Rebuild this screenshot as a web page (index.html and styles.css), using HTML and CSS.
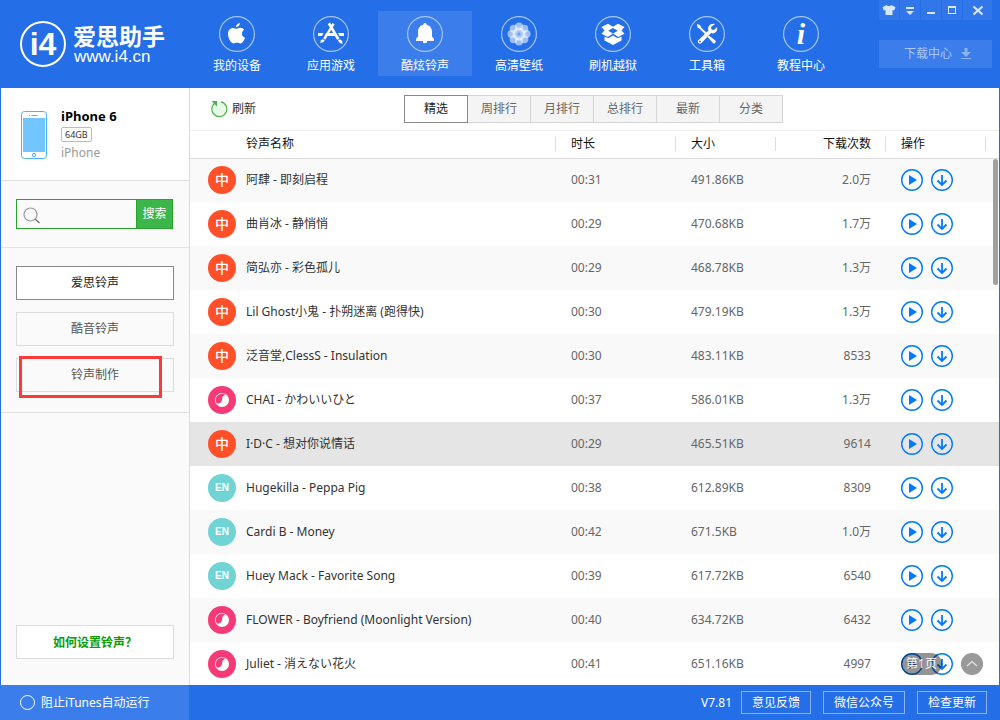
FILE: index.html
```html
<!DOCTYPE html>
<html lang="zh-CN">
<head>
<meta charset="utf-8">
<meta name="viewport" content="width=device-width, initial-scale=1">
<title>爱思助手</title>
<link rel="stylesheet" href="styles.css">
</head>
<body>
<svg class="sprite" aria-hidden="true">
  <symbol id="play" viewBox="0 0 22 22"><circle cx="11" cy="11" r="10.3" fill="none" stroke="currentColor" stroke-width="1.4"/><path d="M8 6l8 5-8 5z" fill="currentColor"/></symbol>
  <symbol id="down" viewBox="0 0 22 22"><circle cx="11" cy="11" r="10.3" fill="none" stroke="currentColor" stroke-width="1.4"/><path d="M11 6v10M6.500 11.500L11 16l4.500-4.500" fill="none" stroke="currentColor" stroke-width="1.8"/></symbol>
  <symbol id="swirl" viewBox="0 0 28 28"><circle cx="14" cy="14" r="7" fill="#fff"/><path d="M9 17.600A6.200 6.200 0 0 1 17.800 9C15 9 14.300 11 14.200 13c-.2 3.200-2.400 4.900-5.200 4.600z" fill="#f63a78"/></symbol>
</svg>
<div class="app">
  <header class="topbar">
    <a class="brand" href="#">
      <span class="brand-mark">i4</span>
      <span class="brand-text"><strong>爱思助手</strong><span>www.i4.cn</span></span>
    </a>
    <nav class="mainnav">
      <a href="#"><svg viewBox="0 0 36 36"><circle class="ring" cx="18" cy="18" r="17.400"/><path d="M20.800 7c.2 2.300-1.800 4.200-3.800 4.200C16.800 9.200 18.700 7.200 20.800 7zM17.700 12.700c.9 0 2-.9 3.800-.9 1.600 0 2.900.8 3.700 2-3.400 2-2.800 6.700.8 8-.8 2.300-2.500 5.600-4.500 5.600-1.300 0-1.900-.7-3.500-.7s-2.200.7-3.500.7c-2.600 0-5.500-5.200-5.500-9.300 0-4 2.400-6.200 5-6.200 1.500 0 2.800.8 3.700.8z"/></svg>我的设备</a>
      <a href="#"><svg viewBox="0 0 36 36"><circle class="ring" cx="18" cy="18" r="17.400"/><path d="M5 17h5.500l-1.500 3H5zM13 17h8l1.500 3H11.500zM25 17h6v3h-4.500z"/><path d="M17 6.500l9.500 16-2.300 1.400-9.500-16zM24.800 24.600l2.200-1.300 2.200 1.800.3 2.900-2.600-1zM19.500 7l2.100 1.200-2 3.400-2-1.300zM16.800 11.500l2 1.200-6.500 11-2.100-1.200zM9.700 23.200l2.100 1.200-1.400 1.600-3 1.200.4-3z"/></svg>应用游戏</a>
      <a href="#" class="active" aria-current="page"><svg viewBox="0 0 36 36"><circle class="ring" cx="18" cy="18" r="17.400"/><path d="M18 7c-1 0-1.600.7-1.600 1.800C13 9.500 11 12.200 11 16v4.500c0 .8-2 1.400-2 2.500v2h7v1.300c0 .5.800.9 2 .9s2-.4 2-.9V25h7v-2c0-1.100-2-1.700-2-2.500V16c0-3.800-2-6.500-5.400-7.200C19.600 7.700 19 7 18 7z"/></svg>酷炫铃声</a>
      <a href="#"><svg viewBox="0 0 36 36"><circle class="ring" cx="18" cy="18" r="17.400"/><g fill-opacity=".55"><circle cx="18" cy="10.500" r="4"/><circle cx="23.300" cy="12.700" r="4"/><circle cx="25.500" cy="18" r="4"/><circle cx="23.300" cy="23.300" r="4"/><circle cx="18" cy="25.500" r="4"/><circle cx="12.700" cy="23.300" r="4"/><circle cx="10.500" cy="18" r="4"/><circle cx="12.700" cy="12.700" r="4"/></g><circle cx="18" cy="18" r="6.500" fill-opacity=".6"/><circle cx="18" cy="18" r="1.500" fill="#6d9ff0"/></svg>高清壁纸</a>
      <a href="#"><svg viewBox="0 0 36 36"><circle class="ring" cx="18" cy="18" r="17.400"/><path d="M13 7.800l5 3 5-3 6.500 3.200-3 3.500 3 3.300-6.300 3.200-5.200-3.500-5.200 3.500-6.300-3.200 3-3.300-3-3.500zM18 12l-4.800 2.800L18 17.500l4.800-2.700z" fill-rule="evenodd"/><path d="M9.500 20.500l3.800 1.800L18 19.500l4.700 2.800 3.800-1.800v4L18 29l-8.500-4.500z"/></svg>刷机越狱</a>
      <a href="#"><svg viewBox="0 0 36 36"><circle class="ring" cx="18" cy="18" r="17.400"/><path d="M8 8l3 1 1.500 3L18 17l-1.500 1.500L11 13l-2.500-1.500zM20 19.500l6.500 5.300c1 1-1 3.500-2.300 2.500L18.500 21z"/><path d="M26 8c-5-1-8 3-6.500 6.500l-10 9.500c-2 2 1 5 3 3l9.500-10c3.500 1.500 7-1.500 6-6l-3 3-2.500-.5-.5-2.500z"/><circle cx="11" cy="25.500" r=".9" fill="#246ee8"/></svg>工具箱</a>
      <a href="#"><svg viewBox="0 0 36 36"><circle class="ring" cx="18" cy="18" r="17.400"/><text class="info-i" x="18" y="28" text-anchor="middle">i</text></svg>教程中心</a>
    </nav>
    <div class="tools">
      <div class="winbtns">
        <button aria-label="换肤"><svg viewBox="0 0 20 20"><path d="M7.500 5c1 1.300 4 1.300 5 0l4 2.200-1.300 3.300-1.700-.6V15h-7V9.900l-1.700.6L3.500 7.200z"/></svg></button>
        <button aria-label="菜单"><svg viewBox="0 0 20 20"><path d="M6 7h8v2H6zM6 11h8l-4 4z"/></svg></button>
        <button aria-label="最小化"><svg viewBox="0 0 20 20"><path d="M6 12h8v2H6z"/></svg></button>
        <button aria-label="最大化"><svg viewBox="0 0 20 20"><path fill-rule="evenodd" d="M6 6h8v8H6zM7 8v5h6V8z"/></svg></button>
        <button class="close" aria-label="关闭"><svg viewBox="0 0 20 20"><path d="M5.500 6.500l9 8M14.500 6.500l-9 8" stroke="#d9e6fc" stroke-width="2.200"/></svg></button>
      </div>
      <button class="dlcenter">下载中心<svg viewBox="0 0 10 12"><path d="M3.500 0h3v4H10L5 9 0 4h3.500zM0 10h10v1H0z"/></svg></button>
    </div>
  </header>

  <div class="body">
    <aside class="sidebar">
      <section class="device">
        <svg class="phone" viewBox="0 0 26 48"><rect x=".5" y=".5" width="25" height="47" rx="3" fill="#fff" stroke="#4db0ff"/><path fill="#72c5ff" d="M2 7h22v34H2z"/><path d="M10.500 4.500h6M8 4.500h1" stroke="#4db0ff"/><circle cx="13" cy="44" r="1.700" fill="none" stroke="#4db0ff"/></svg>
        <div class="device-info">
          <strong>iPhone 6</strong>
          <span class="capacity">64GB</span>
          <span class="model">iPhone</span>
        </div>
      </section>
      <form class="search">
        <label for="q" aria-label="搜索铃声"><svg viewBox="0 0 18 18"><circle cx="7.500" cy="7.500" r="6.500" fill="none" stroke="#999" stroke-width="1.200"/><path d="M12 12l4.500 4" stroke="#777" stroke-width="1.500"/></svg></label>
        <input id="q" type="text">
        <button type="button">搜索</button>
      </form>
      <nav class="sources">
        <button class="active">爱思铃声</button>
        <button>酷音铃声</button>
        <div class="marked"><button>铃声制作</button><span class="marker"></span></div>
      </nav>
      <button class="help">如何设置铃声<span class="qmark">？</span></button>
    </aside>

    <main class="content">
      <div class="toolbar">
        <button class="refresh"><svg viewBox="0 0 18 18"><path d="M11 1.800A7.500 7.500 0 1 1 5 3" fill="#e6fae6" stroke="#4cb050" stroke-width="1.200"/><path d="M1.500 1H7v5.500z" fill="#4cb050"/></svg>刷新</button>
        <div class="tabs">
          <button class="active">精选</button><button>周排行</button><button>月排行</button><button>总排行</button><button>最新</button><button>分类</button>
        </div>
      </div>
      <table class="songs">
        <colgroup><col><col class="w-time"><col class="w-size"><col class="w-count"><col class="w-ops"><col class="w-end"></colgroup>
        <thead><tr><th>铃声名称</th><th>时长</th><th>大小</th><th class="num">下载次数</th><th>操作</th><th></th></tr></thead>
        <tbody>
          <tr><td><div class="song"><span class="tag cn">中</span>阿肆 - 即刻启程</div></td><td>00:31</td><td>491.86KB</td><td class="num">2.0万</td><td colspan="2"><div class="ops"><button aria-label="播放"><svg><use href="#play"/></svg></button><button aria-label="下载"><svg><use href="#down"/></svg></button></div></td></tr>
          <tr><td><div class="song"><span class="tag cn">中</span>曲肖冰 - 静悄悄</div></td><td>00:29</td><td>470.68KB</td><td class="num">1.7万</td><td colspan="2"><div class="ops"><button aria-label="播放"><svg><use href="#play"/></svg></button><button aria-label="下载"><svg><use href="#down"/></svg></button></div></td></tr>
          <tr><td><div class="song"><span class="tag cn">中</span>简弘亦 - 彩色孤儿</div></td><td>00:29</td><td>468.78KB</td><td class="num">1.3万</td><td colspan="2"><div class="ops"><button aria-label="播放"><svg><use href="#play"/></svg></button><button aria-label="下载"><svg><use href="#down"/></svg></button></div></td></tr>
          <tr><td><div class="song"><span class="tag cn">中</span>Lil Ghost小鬼 - 扑朔迷离 (跑得快)</div></td><td>00:30</td><td>479.19KB</td><td class="num">1.3万</td><td colspan="2"><div class="ops"><button aria-label="播放"><svg><use href="#play"/></svg></button><button aria-label="下载"><svg><use href="#down"/></svg></button></div></td></tr>
          <tr><td><div class="song"><span class="tag cn">中</span>泛音堂,ClessS - Insulation</div></td><td>00:30</td><td>483.11KB</td><td class="num">8533</td><td colspan="2"><div class="ops"><button aria-label="播放"><svg><use href="#play"/></svg></button><button aria-label="下载"><svg><use href="#down"/></svg></button></div></td></tr>
          <tr><td><div class="song"><svg class="tag jp"><use href="#swirl"/></svg>CHAI - かわいいひと</div></td><td>00:37</td><td>586.01KB</td><td class="num">1.3万</td><td colspan="2"><div class="ops"><button aria-label="播放"><svg><use href="#play"/></svg></button><button aria-label="下载"><svg><use href="#down"/></svg></button></div></td></tr>
          <tr class="selected"><td><div class="song"><span class="tag cn">中</span>I·D·C - 想对你说情话</div></td><td>00:29</td><td>465.51KB</td><td class="num">9614</td><td colspan="2"><div class="ops"><button aria-label="播放"><svg><use href="#play"/></svg></button><button aria-label="下载"><svg><use href="#down"/></svg></button></div></td></tr>
          <tr><td><div class="song"><span class="tag en">EN</span>Hugekilla - Peppa Pig</div></td><td>00:38</td><td>612.89KB</td><td class="num">8309</td><td colspan="2"><div class="ops"><button aria-label="播放"><svg><use href="#play"/></svg></button><button aria-label="下载"><svg><use href="#down"/></svg></button></div></td></tr>
          <tr><td><div class="song"><span class="tag en">EN</span>Cardi B - Money</div></td><td>00:42</td><td>671.5KB</td><td class="num">1.0万</td><td colspan="2"><div class="ops"><button aria-label="播放"><svg><use href="#play"/></svg></button><button aria-label="下载"><svg><use href="#down"/></svg></button></div></td></tr>
          <tr><td><div class="song"><span class="tag en">EN</span>Huey Mack - Favorite Song</div></td><td>00:39</td><td>617.72KB</td><td class="num">6540</td><td colspan="2"><div class="ops"><button aria-label="播放"><svg><use href="#play"/></svg></button><button aria-label="下载"><svg><use href="#down"/></svg></button></div></td></tr>
          <tr><td><div class="song"><svg class="tag jp"><use href="#swirl"/></svg>FLOWER - Boyfriend (Moonlight Version)</div></td><td>00:40</td><td>634.72KB</td><td class="num">6432</td><td colspan="2"><div class="ops"><button aria-label="播放"><svg><use href="#play"/></svg></button><button aria-label="下载"><svg><use href="#down"/></svg></button></div></td></tr>
          <tr><td><div class="song"><svg class="tag jp"><use href="#swirl"/></svg>Juliet - 消えない花火</div></td><td>00:41</td><td>651.16KB</td><td class="num">4997</td><td colspan="2"><div class="ops"><button aria-label="播放"><svg><use href="#play"/></svg></button><button aria-label="下载"><svg><use href="#down"/></svg></button></div></td></tr>
        </tbody>
      </table>
      <span class="scrollbar"></span>
      <div class="pager"><span class="page">第1页</span><button class="totop" aria-label="返回顶部"><svg viewBox="0 0 22 22"><path d="M6 13l5-4.500 5 4.500" fill="none" stroke="#e4e4e4" stroke-width="1.300"/></svg></button></div>
    </main>
  </div>

  <footer class="statusbar">
    <label class="block"><input type="checkbox">阻止iTunes自动运行</label>
    <div class="actions"><span>V7.81</span><button>意见反馈</button><button class="wide">微信公众号</button><button>检查更新</button></div>
  </footer>
</div>
</body>
</html>
```

FILE: styles.css
```css
* { box-sizing: border-box; }
body {
  margin: 0;
  font: 12px/16px "Noto Sans", "Noto Sans CJK SC", sans-serif;
  color: #333;
}
button, input { font: inherit; color: inherit; margin: 0; padding: 0; border: 0; background: none; }
button { cursor: pointer; }
a { color: inherit; text-decoration: none; }
svg { display: block; }
.sprite { position: absolute; width: 0; height: 0; }

.app { display: flex; flex-direction: column; height: 100vh; background: #246ee8; }

/* top bar */
.topbar { display: flex; height: 88px; padding-right: 8px; color: #fff; flex: none; }
.brand { display: flex; gap: 7px; width: 190px; padding: 21px 0 0 20px; }
.brand-mark {
  width: 46px; height: 46px; border: 2px solid #fff; border-radius: 50%;
  font: bold 32px/42px "Liberation Sans", sans-serif; text-align: center;
}
.brand-text { display: flex; flex-direction: column; }
.brand-text strong { font: bold 23px/28px "Noto Sans CJK SC", sans-serif; }
.brand-text span { font: 17px/16px "Liberation Sans", sans-serif; padding-left: 1px; }
.mainnav { display: flex; padding: 11px 0 12px; }
.mainnav a { display: flex; flex-direction: column; align-items: center; gap: 6px; width: 94px; padding-top: 5px; }
.mainnav .active { background: #3b7eeb; }
.mainnav svg { width: 36px; height: 36px; fill: #fff; }
.ring { fill: none; stroke: #a5c4f6; stroke-width: 1.2; }
.info-i { font: italic bold 30px "Liberation Serif", serif; }
.tools { margin-left: auto; width: 113px; }
.winbtns { display: flex; gap: 1px; }
.winbtns button { flex: none; width: 20px; height: 20px; background: #3277e9; }
.winbtns .close { flex: 1; }
.winbtns svg { width: 20px; height: 20px; margin: 0 auto; fill: #d9e6fc; }
.dlcenter {
  display: flex; align-items: center; justify-content: center; gap: 9px;
  width: 100%; height: 28px; margin-top: 20px; padding-left: 4px; background: #3b7eeb; color: #a9c7f7;
}
.dlcenter svg { width: 10px; height: 12px; fill: #8bb2f3; }

/* body */
.body { display: flex; flex: 1; min-height: 0; padding: 0 1px; }
.sidebar { display: flex; flex-direction: column; width: 189px; flex: none; background: #fafafa; border-right: 1px solid #ddd; }
.device { display: flex; gap: 14px; height: 93px; padding: 20px; background: #fff; border-bottom: 1px solid #e2e2e2; }
.phone { width: 26px; height: 48px; margin-top: 3px; }
.device-info { display: flex; flex-direction: column; align-items: flex-start; }
.device-info strong { color: #000; font-size: 13px; }
.capacity { margin: 3px 0; padding: 0 3px; border: 1px solid #bbb; border-radius: 2px; font-size: 9px; line-height: 13px; }
.model { color: #999; }
.search { display: flex; height: 67px; padding: 18px 16px 18px 15px; border-bottom: 1px solid #e2e2e2; }
.search label { width: 30px; padding: 7px 0 0 6px; border: 1px solid #28a428; border-right: 0; }
.search svg { width: 18px; height: 18px; }
.search input { flex: 1; min-width: 0; border: solid #28a428; border-width: 1px 0; outline: 0; }
.search button { width: 37px; background: #3cb54a; border: 1px solid #28a428; color: #fff; }
.sources { display: flex; flex-direction: column; gap: 12px; padding: 18px 15px 20px; border-bottom: 1px solid #e2e2e2; }
.sources button, .help { width: 100%; height: 34px; border: 1px solid #ddd; color: #555; }
.sources .active { border-color: #888; background: #fff; color: #222; }
.marked { position: relative; }
.marker { position: absolute; left: 3px; top: -2px; right: 12px; height: 42px; border: 3px solid #fc3a39; }
.sidebar .help { width: auto; margin: auto 15px 26px; background: #fff; color: #0a9c0a; font-weight: bold; }
.qmark { font-family: "Noto Sans CJK TC", sans-serif; }

.content { position: relative; flex: 1; min-width: 0; overflow: hidden; background: #fff; }
.toolbar { display: flex; height: 43px; padding: 7px 20px; border-bottom: 1px solid #eee; }
.refresh { display: flex; align-items: center; gap: 4px; width: 194px; flex: none; }
.refresh svg { width: 18px; height: 18px; }
.tabs { display: flex; }
.tabs button { width: 63px; height: 28px; border: solid #d5d5d5; border-width: 1px 1px 1px 0; background: #f4f4f4; color: #666; }
.tabs .active { width: 64px; border: 1px solid #888; background: #fff; color: #222; }

.songs { width: 100%; table-layout: fixed; border-collapse: collapse; }
.w-time { width: 120px; }
.w-size { width: 100px; }
.w-count { width: 110px; }
.w-ops { width: 100px; }
.w-end { width: 13px; }
.songs th {
  height: 27px; padding: 0 0 0 15px; text-align: left; font-weight: normal; color: #111;
  background: linear-gradient(#ddd, #ddd) no-repeat right center / 1px 14px;
}
.songs th:first-child { padding-left: 56px; }
.songs th:last-child { background: none; }
.songs thead { border-bottom: 1px solid #ddd; }
.songs td { height: 44px; padding: 0 0 0 15px; color: #666; }
.songs td:first-child { padding-left: 18px; }
.songs .num { text-align: right; padding-right: 15px; }
.songs tbody tr:nth-child(odd) { background: #f9f9f9; }
.songs tbody .selected:nth-child(odd) { background: #e5e5e5; }
.song { display: flex; align-items: center; gap: 10px; color: #333; }
.tag { flex: none; width: 28px; height: 28px; border-radius: 50%; color: #fff; text-align: center; font-weight: bold; line-height: 28px; }
.cn { background: #ff5029; font-size: 14px; font-weight: 500; }
.en { background: #70d4d4; font: bold 10px/28px "Liberation Sans", sans-serif; }
.jp { background: #f63a78; }
.ops { display: flex; gap: 8px; }
.ops button { width: 22px; height: 22px; color: #007aff; }
.ops svg { width: 22px; height: 22px; }
.scrollbar { position: absolute; top: 71px; right: 1px; width: 5px; height: 126px; border-radius: 3px; background: #a0a0a0; }
.pager { position: absolute; right: 16px; bottom: 10px; display: flex; gap: 19px; }
.page { width: 41px; height: 22px; border-radius: 11px; background: rgba(0, 0, 0, .42); color: #fff; text-align: center; line-height: 21px; }
.totop { width: 22px; height: 22px; border-radius: 50%; background: #999; }

/* status bar */
.statusbar { display: flex; height: 35px; flex: none; color: #fff; }
.block { display: flex; align-items: center; gap: 6px; width: 189px; padding-left: 20px; background: #3b7eeb; }
.block input { appearance: none; width: 15px; height: 15px; border: 1px solid #fff; border-radius: 50%; }
.actions { display: flex; align-items: center; gap: 12px; margin-left: auto; padding-right: 13px; }
.actions span { margin-right: -3px; }
.actions button { width: 70px; height: 23px; border: 1px solid #8bb2f3; }
.actions .wide { width: 82px; }
```
